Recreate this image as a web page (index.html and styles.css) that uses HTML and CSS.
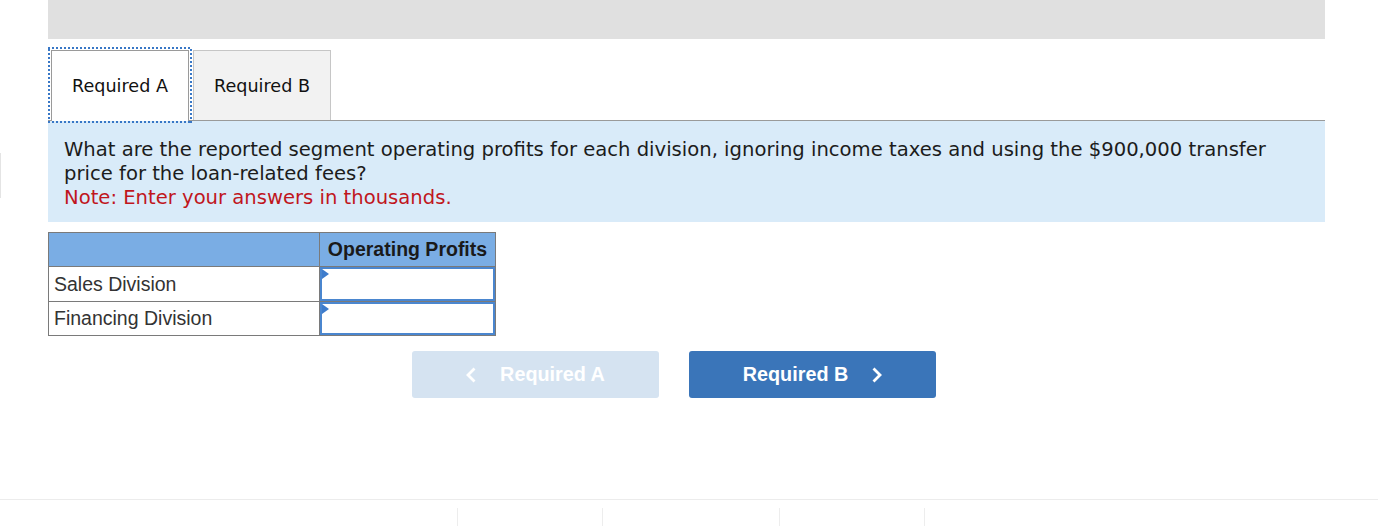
FILE: index.html
```html
<!DOCTYPE html>
<html>
<head>
<meta charset="utf-8">
<link rel="stylesheet" href="styles.css">
</head>
<body>
<div class="edge"></div>
<div class="page">
  <div class="topbar"></div>
  <div class="tabs">
    <div class="tab active">Required A</div>
    <div class="tab">Required B</div>
  </div>
  <div class="question">
    <p>What are the reported segment operating profits for each division, ignoring income taxes and using the $900,000 transfer price for the loan-related fees?</p>
    <p class="note">Note: Enter your answers in thousands.</p>
  </div>
  <table class="grid">
    <tr>
      <th class="c1"></th>
      <th class="c2">Operating Profits</th>
    </tr>
    <tr>
      <td class="label">Sales Division</td>
      <td class="cell"><div class="input"></div></td>
    </tr>
    <tr class="last-row">
      <td class="label">Financing Division</td>
      <td class="cell"><div class="input"></div></td>
    </tr>
  </table>
  <div class="nav">
    <button class="btn prev">
      <svg width="10" height="16" viewBox="0 0 10 16"><polyline points="8.5,1.5 2,8 8.5,14.5" fill="none" stroke="#ffffff" stroke-width="2.8"/></svg>
      <span>Required A</span>
    </button>
    <button class="btn next">
      <span>Required B</span>
      <svg width="10" height="16" viewBox="0 0 10 16"><polyline points="1.5,1.5 8,8 1.5,14.5" fill="none" stroke="#ffffff" stroke-width="2.8"/></svg>
    </button>
  </div>
</div>
<div class="footer">
  <div class="fcell"></div>
  <div class="fcell"></div>
  <div class="fcell last"></div>
</div>
</body>
</html>
```

FILE: styles.css
```css
html, body {
  margin: 0;
  padding: 0;
  background: #ffffff;
}
body {
  font-family: "DejaVu Sans", Verdana, sans-serif;
  position: relative;
}
.edge {
  position: absolute;
  left: 0;
  top: 153px;
  width: 1px;
  height: 45px;
  background: #e4e4e4;
}
.page {
  padding: 0 53px 0 48px;
}
.topbar {
  height: 39px;
  background: #e0e0e0;
}
.tabs {
  margin-top: 11px;
  height: 70px;
  display: flex;
  border-bottom: 1px solid #9a9a9a;
}
.tab {
  box-sizing: border-box;
  width: 138px;
  margin-left: 4px;
  display: flex;
  align-items: center;
  justify-content: center;
  font-size: 17.6px;
  color: #111111;
  background: #f2f2f2;
  border: 1px solid #c6c6c6;
  border-bottom: none;
}
.tab.active {
  margin-left: 3px;
  background: #ffffff;
  border-color: #9a9a9a;
  margin-bottom: -1px;
  position: relative;
}
.tab.active::after {
  content: "";
  position: absolute;
  left: -4px;
  top: -4px;
  right: -4px;
  bottom: -2px;
  background:
    linear-gradient(90deg, #3877c6 50%, transparent 50%) left top / 4px 2px repeat-x,
    linear-gradient(90deg, #3877c6 50%, transparent 50%) left bottom / 4px 2px repeat-x,
    linear-gradient(0deg, #3877c6 50%, transparent 50%) left top / 2px 4px repeat-y,
    linear-gradient(0deg, #3877c6 50%, transparent 50%) right top / 2px 4px repeat-y;
  pointer-events: none;
}
.question {
  background: #d9ebf9;
  padding: 17px 50px 12px 16px;
  font-size: 19.6px;
  line-height: 24px;
  color: #1c1c1c;
}
.question p {
  margin: 0;
}
.question .note {
  color: #c0161d;
}
.grid {
  margin-top: 10px;
  border-collapse: collapse;
  font-family: "Liberation Sans", Arial, sans-serif;
  font-size: 19.5px;
}
.grid th {
  background: #7aade4;
  border: 1px solid #7a7a7a;
  height: 33px;
  padding: 0;
  font-weight: bold;
  color: #1a1a1a;
}
.grid .c1 {
  width: 270px;
}
.grid .c2 {
  width: 175px;
}
.grid td {
  border: 1px solid #7a7a7a;
  height: 34px;
  padding: 0;
}
.grid .last-row td {
  height: 33px;
}
.grid .label {
  padding-left: 5px;
  color: #333333;
}
.grid .cell {
  padding: 0;
  vertical-align: top;
}
.input {
  box-sizing: border-box;
  height: 34px;
  border: 2px solid #4a86cf;
  background: #ffffff;
  position: relative;
}
.last-row .input {
  height: 33px;
}
.input::before {
  content: "";
  position: absolute;
  left: 0;
  top: 0;
  border-left: 7px solid #3e7ccc;
  border-top: 5px solid transparent;
  border-bottom: 5px solid transparent;
}
.nav {
  margin-top: 15px;
  margin-left: 364px;
  display: flex;
  gap: 30px;
}
.btn {
  width: 247px;
  height: 47px;
  border: none;
  border-radius: 3px;
  display: flex;
  align-items: center;
  justify-content: center;
  gap: 24px;
  font-family: "Liberation Sans", Arial, sans-serif;
  font-weight: bold;
  font-size: 19.8px;
  color: #ffffff;
  padding: 0;
}
.btn svg {
  display: block;
}
.btn.prev {
  background: #d5e3f1;
}
.btn.next {
  background: #3a75b9;
}
.footer {
  margin-top: 101px;
  border-top: 1px solid #ececec;
  padding-top: 8px;
  padding-left: 457px;
  display: flex;
  height: 20px;
}
.fcell {
  height: 20px;
  border-left: 1px solid #ededed;
  width: 144px;
}
.fcell:nth-child(2) {
  width: 176px;
}
.fcell.last {
  border-right: 1px solid #ededed;
}
```
